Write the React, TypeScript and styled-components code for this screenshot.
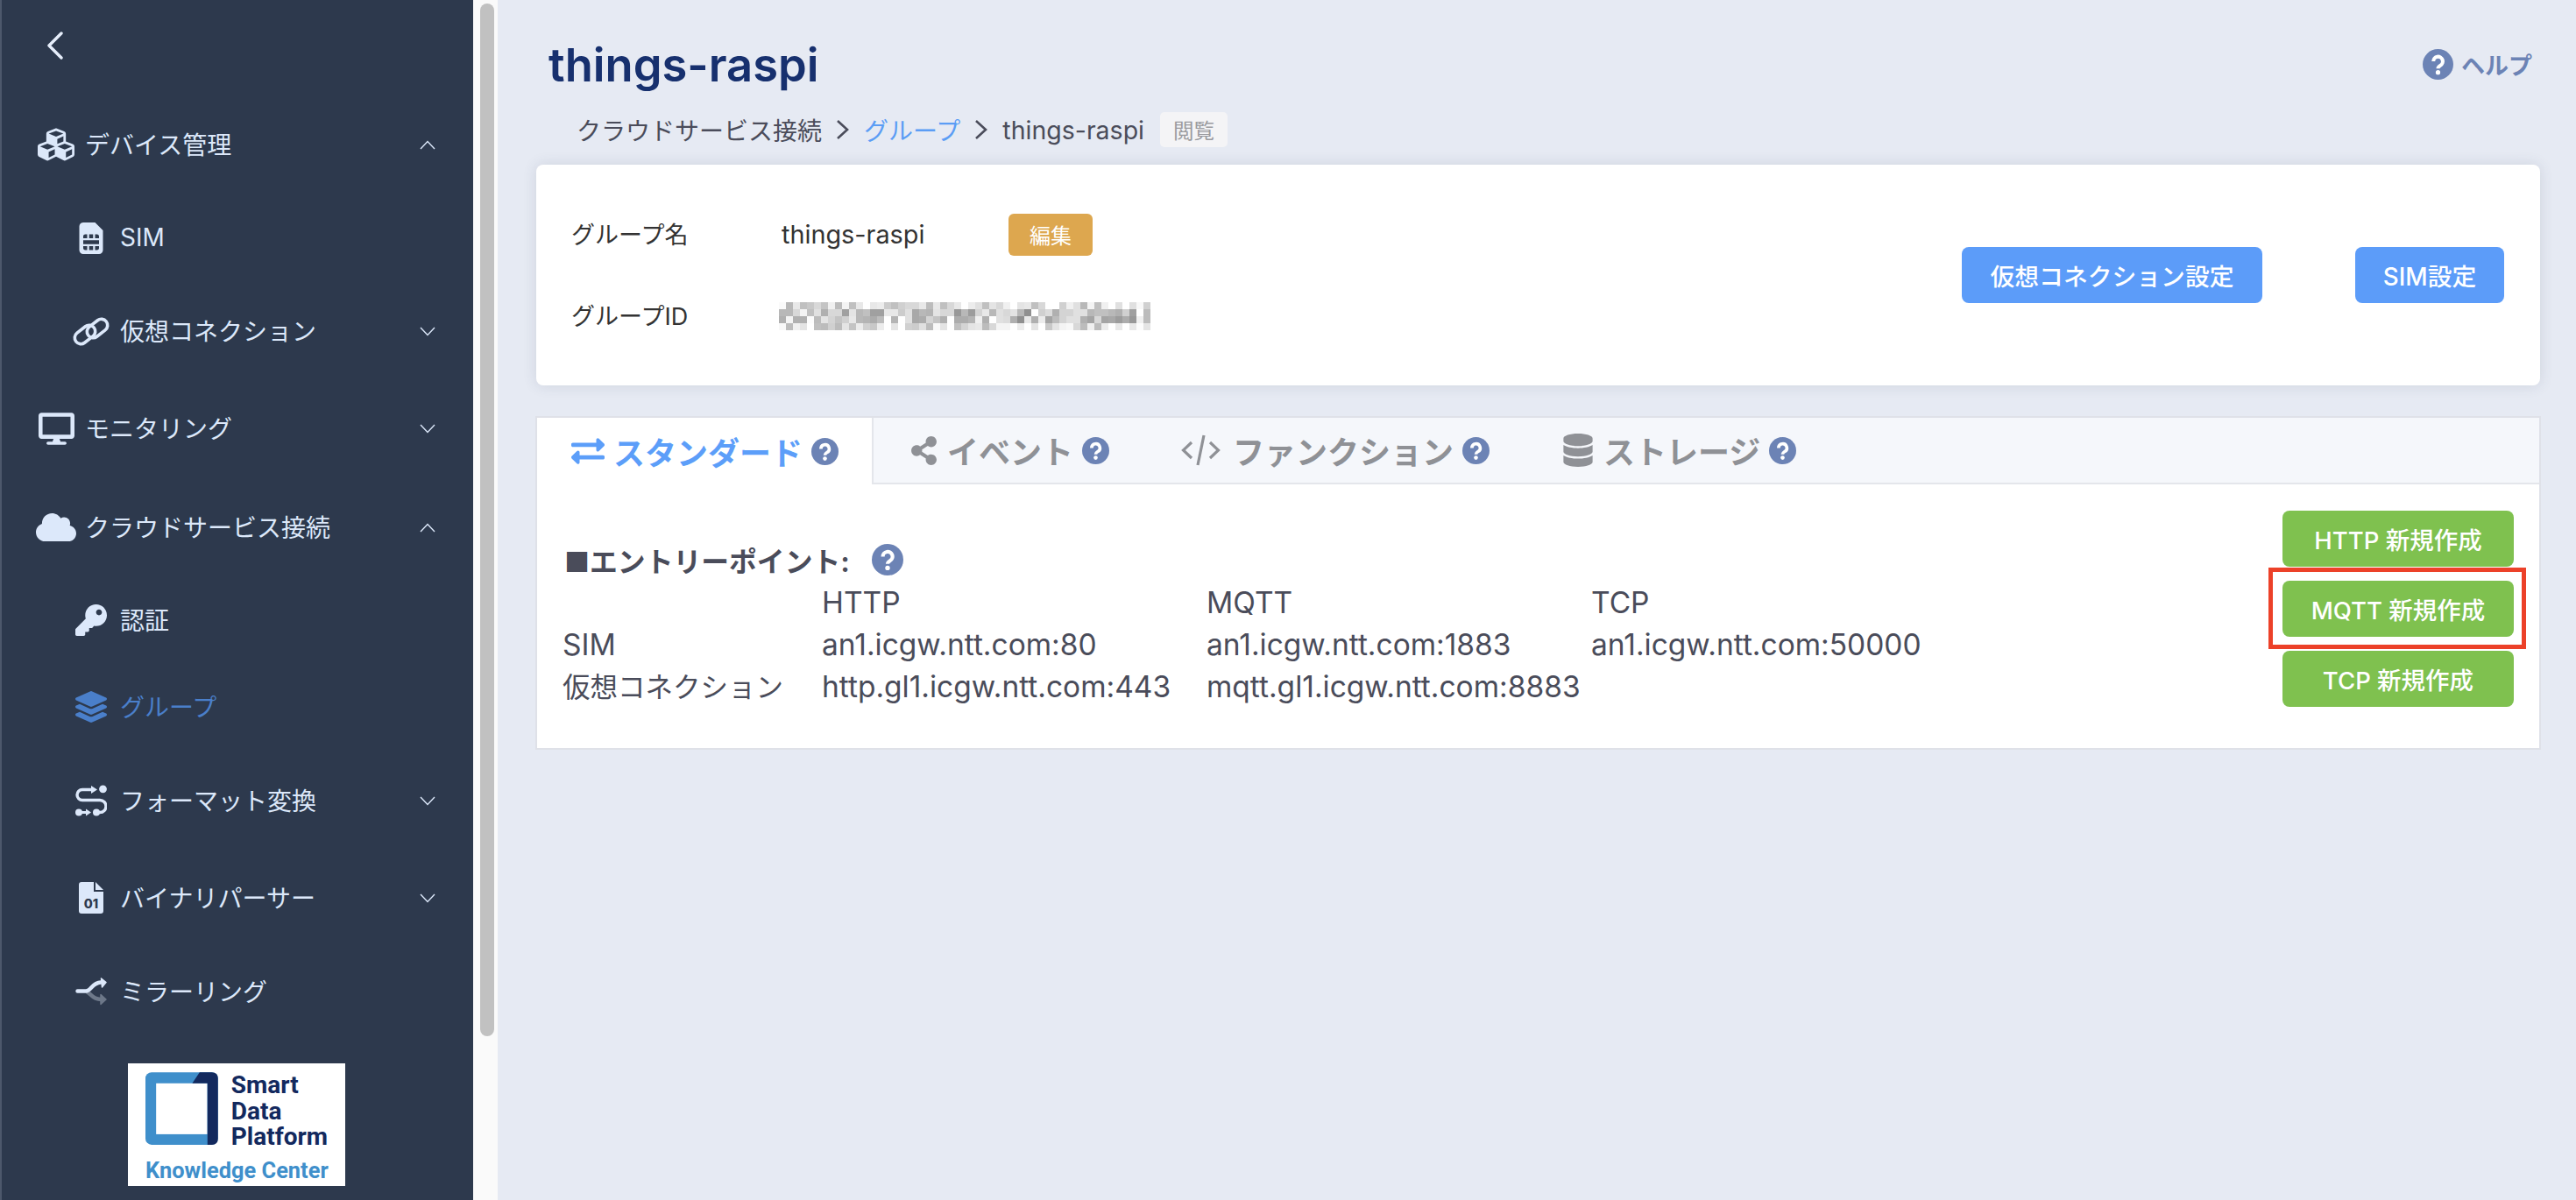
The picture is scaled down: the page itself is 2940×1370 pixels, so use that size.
import React from 'react';
import styled, { createGlobalStyle } from 'styled-components';
import {
  FaCubes,
  FaSimCard,
  FaDesktop,
  FaCloud,
  FaKey,
  FaLayerGroup,
  FaExchangeAlt,
  FaShareAlt,
  FaDatabase,
} from 'react-icons/fa';

const GlobalStyle = createGlobalStyle`
  html, body {
    margin: 0;
    padding: 0;
    height: 100%;
    overflow: hidden;
    background: #e6eaf3;
  }
  body {
    font-family: Inter, "Noto Sans CJK JP", sans-serif;
  }
  * {
    box-sizing: border-box;
  }
`;

const Page = styled.div`
  display: flex;
  width: 100%;
  height: 100vh;
  overflow: hidden;
`;

const Sidebar = styled.aside`
  width: 540px;
  flex: none;
  background: #2d394d;
  border-left: 2px solid #4d586b;
  color: #dce8fa;
`;

const BackBar = styled.div`
  height: 104px;
  margin-bottom: 8px;
  padding-left: 51px;
  display: flex;
  align-items: center;
`;

const NavRow = styled.div<{ $h: number; $sub?: boolean; $active?: boolean }>`
  height: ${(p) => p.$h}px;
  display: flex;
  align-items: center;
  padding-left: ${(p) => (p.$sub ? 79 : 39)}px;
  padding-right: 43px;
  font-size: 28px;
  color: ${(p) => (p.$active ? '#4a7fca' : '#dce8fa')};
`;

const NavIcon = styled.span`
  width: 46px;
  flex: none;
  display: flex;
  justify-content: center;
  align-items: center;
  margin-right: 10px;
`;

const NavLabel = styled.span`
  margin-top: -2px;
`;

const NavChevron = styled.span`
  margin-left: auto;
  display: flex;
`;

const LogoCard = styled.div`
  width: 248px;
  height: 140px;
  margin: 26px 0 0 144px;
  background: #fff;
  padding: 10px 20px 0;
  font-family: Roboto, sans-serif;
  font-weight: 700;
`;

const LogoTop = styled.div`
  display: flex;
  gap: 15px;
`;

const LogoName = styled.div`
  color: #13295e;
  font-size: 28px;
  line-height: 29.5px;
`;

const LogoCaption = styled.div`
  margin-top: 8px;
  color: #3f8fcb;
  font-size: 25.4px;
  line-height: 30px;
  white-space: nowrap;
`;

const ScrollTrack = styled.div`
  width: 28px;
  flex: none;
  background: #fafafa;
  padding: 4px 4px 0 8px;
`;

const ScrollThumb = styled.div`
  height: 1179px;
  border-radius: 8px;
  background: #c1c1c1;
`;

const Main = styled.main`
  flex: 1;
  min-width: 0;
  padding: 0 41px 0 44px;
`;

const HeadRow = styled.div`
  height: 110px;
  padding: 38px 9px 0 14px;
  display: flex;
  justify-content: space-between;
  align-items: center;
`;

const Title = styled.h1`
  margin: 0;
  color: #17306e;
  font-size: 52.5px;
  font-weight: 600;
  line-height: 70px;
`;

const HelpLink = styled.div`
  display: flex;
  align-items: center;
  gap: 9px;
  margin-top: -2px;
  color: #6c83b5;
  font-size: 27px;
  font-weight: 600;
`;

const Breadcrumb = styled.nav`
  height: 40px;
  margin: 18px 0 20px 46px;
  display: flex;
  align-items: center;
  color: #4a4c5a;
  font-size: 28px;
`;

const CrumbLink = styled.span`
  color: #5b9df5;
`;

const CrumbCurrent = styled.span`
  font-size: 28.5px;
`;

const CrumbArrow = styled.span`
  display: flex;
  margin: 0 16px;
`;

const ViewBadge = styled.span`
  height: 40px;
  margin-left: 18px;
  padding: 0 15px;
  display: flex;
  align-items: center;
  border-radius: 5px;
  background: #f4f4f6;
  color: #9a9a9e;
  font-size: 23.5px;
`;

const InfoCard = styled.section`
  height: 252px;
  padding: 0 41px;
  display: flex;
  justify-content: space-between;
  align-items: center;
  background: #fff;
  border-radius: 8px;
  box-shadow: 0 0 16px rgba(60, 70, 100, 0.14);
`;

const InfoGrid = styled.div`
  display: grid;
  grid-template-columns: 239px 259px auto;
  grid-auto-rows: 48px;
  row-gap: 45px;
  align-items: center;
  color: #333;
  font-size: 27px;
`;

const InfoLabel = styled.span`
  margin-top: -2px;
  margin-left: -1px;
`;

const InfoValue = styled.span`
  font-size: 28.8px;
`;

const Mosaic = styled.svg`
  display: block;
  margin-left: -3px;
`;

const EditButton = styled.button`
  width: 96px;
  height: 48px;
  padding: 0;
  border: 0;
  border-radius: 6px;
  background: #dda74f;
  color: #fff;
  font: inherit;
  font-size: 24px;
`;

const ButtonGroup = styled.div`
  display: flex;
  gap: 106px;
`;

const ActionButton = styled.button<{ $wide?: boolean }>`
  width: ${(p) => (p.$wide ? 343 : 170)}px;
  height: 64px;
  padding: 0;
  border: 0;
  border-radius: 8px;
  background: #5c9cf9;
  color: #fff;
  font: inherit;
  font-size: 27.8px;
  font-weight: 500;
`;

const TabCard = styled.section`
  height: 381px;
  margin-top: 35px;
  margin-right: -1px;
  margin-left: -1px;
  background: #fff;
  border: 2px solid #dfe1e8;
`;

const TabBar = styled.div`
  height: 76px;
  display: flex;
  background: #f5f7fb;
`;

const Tab = styled.div<{ $active?: boolean }>`
  display: flex;
  align-items: center;
  gap: 10px;
  padding: 0 ${(p) => (p.$active ? 38 : 41)}px 0 ${(p) => (p.$active ? 39 : 41)}px;
  background: ${(p) => (p.$active ? '#fff' : 'transparent')};
  border-right: ${(p) => (p.$active ? '2px solid #e4e6eb' : '0')};
  border-bottom: ${(p) => (p.$active ? '0' : '2px solid #e4e6eb')};
  color: ${(p) => (p.$active ? '#5c9ef9' : '#8f9196')};
  font-size: 36px;
  font-weight: 700;
  white-space: nowrap;
`;

const TabRest = styled.div`
  flex: 1;
  border-bottom: 2px solid #e4e6eb;
`;

const TabBody = styled.div`
  padding: 30px 29px 0 31px;
  display: flex;
  justify-content: space-between;
`;

const EntryBlock = styled.div`
  padding-top: 38px;
  color: #4a4c5a;
`;

const EntryHeading = styled.div`
  height: 36px;
  display: flex;
  align-items: center;
  gap: 25px;
  margin-bottom: 6px;
  font-size: 31.8px;
  font-weight: 700;
`;

const EntryTable = styled.div`
  display: grid;
  grid-template-columns: 296px 439px 439px auto;
  grid-auto-rows: 48px;
  align-items: center;
  margin-left: -2px;
  white-space: nowrap;
`;

const EntryCell = styled.span<{ $kana?: boolean }>`
  font-size: ${(p) => (p.$kana ? 31.5 : 33.5)}px;
  margin-top: ${(p) => (p.$kana ? -3 : 2)}px;
`;

const CreateColumn = styled.div`
  display: flex;
  flex-direction: column;
  gap: 16px;
`;

const CreateButton = styled.button<{ $marked?: boolean }>`
  position: relative;
  width: 264px;
  height: 64px;
  padding: 0;
  border: 0;
  border-radius: 8px;
  background: #7fc14f;
  color: #fff;
  font: inherit;
  font-size: 27.5px;
  font-weight: 500;

  ${(p) =>
    p.$marked &&
    `
    &::after {
      content: '';
      position: absolute;
      top: -15px;
      right: -14px;
      bottom: -14px;
      left: -16px;
      border: 5px solid #ec4129;
      pointer-events: none;
    }
  `}
`;

const mosaicRows = [
  'fa b8 e8 c0 c8 d8 c4 f0 bc f4 c0 e8 ff e8 ec cc c0 d0 d8 d8 e8 bc e8 c0 d8 e8 ff ec e0 c0 e4 d8 f0 ff e4 e8 c0 d8 ff ff d0 f0 e0 b8 f4 c0 f0 ff e0 ff e0 f8 d0',
  'b8 b8 d8 f4 c0 e0 b0 d8 d8 a0 e4 b8 c0 a0 a0 e8 e8 cc e0 a8 b8 b4 e4 d8 d8 98 b8 9c d4 e8 b8 e0 d8 e4 b8 90 ff d0 dc b0 d4 d4 e0 e0 b8 c0 c0 b8 b0 d0 a0 ff bc',
  'b0 f4 b0 b0 fc bc e4 d4 c4 d0 e8 b8 b4 ac bc ff b4 ff e0 a8 ac d4 c4 b0 ff ac ac b4 f0 b0 ff e0 dc b0 90 e8 b0 ec a4 bc d4 e0 e0 b0 a4 d8 a4 a8 9c ac 98 f0 bc',
  'f8 bc f0 e4 ff c0 bc d0 bc e4 c4 ec d0 c8 ec ff e4 ff d0 cc e0 bc f8 e4 ff c0 d4 e4 e8 bc d8 f4 f4 ff ec ff e4 ff c8 e4 f4 f8 d8 bc f0 bc ec ff e8 ff e8 fc e4',
].map((row) => row.split(' '));

const Chevron = ({ up }: { up?: boolean }) => (
  <svg width="18" height="11" viewBox="0 0 18 11" fill="none" stroke="#dce8fa" strokeWidth="1.4">
    <polyline points={up ? '1,10 9,1.5 17,10' : '1,1 9,9.5 17,1'} />
  </svg>
);

const CrumbChevron = () => (
  <svg width="16" height="22" viewBox="0 0 16 22" fill="none" stroke="#4a4c5a" strokeWidth="2.6">
    <polyline points="2,1 13,11 2,21" />
  </svg>
);

// filled circle with a small heavy question mark
const HelpIcon = ({ size }: { size: number }) => (
  <svg width={size} height={size} viewBox="0 0 36 36" style={{ flex: 'none' }}>
    <circle cx="18" cy="18" r="18" fill="#6c83b5" />
    <path d="M12.6 14.4a5.5 5.5 0 1 1 8.2 4.8c-2 1.2-2.8 1.9-2.8 3.6" fill="none" stroke="#fff" strokeWidth="4.2" />
    <circle cx="18" cy="27.4" r="2.7" fill="#fff" />
  </svg>
);

const ChainIcon = () => (
  <svg width="42" height="33" viewBox="0 0 42 33" fill="none" stroke="currentColor" strokeWidth="3.6">
    <rect x="1" y="13" width="26" height="14" rx="7" transform="rotate(-38 14 20)" />
    <rect x="15" y="6" width="26" height="14" rx="7" transform="rotate(-38 28 13)" />
  </svg>
);

const FormatIcon = () => (
  <svg width="36" height="36" viewBox="0 0 36 36">
    <path d="M20 5.5H8a6 6 0 0 0 0 12H28a7 7 0 0 1 0 14H24" fill="none" stroke="currentColor" strokeWidth="3.4" />
    <polygon points="18,1 25,5.5 18,10" fill="currentColor" />
    <circle cx="31.5" cy="4.8" r="4.4" fill="currentColor" />
    <circle cx="4" cy="31.5" r="4" fill="currentColor" />
    <rect x="6" y="30" width="8" height="3" fill="currentColor" />
    <polygon points="12,27.5 18,31.5 12,35.5" fill="currentColor" />
    <circle cx="24" cy="31.5" r="4" fill="currentColor" />
  </svg>
);

const BinaryFileIcon = () => (
  <svg width="28" height="36" viewBox="0 0 28 36">
    <path d="M3 0H17V11H28V33Q28 36 25 36H3Q0 36 0 33V3Q0 0 3 0Z" fill="currentColor" />
    <path d="M19 0L28 9H19Z" fill="currentColor" />
    <text x="14" y="30" textAnchor="middle" fontFamily="Inter" fontWeight="800" fontSize="14.5" fill="#2d394d">
      01
    </text>
  </svg>
);

const MirrorIcon = () => (
  <svg width="36" height="32" viewBox="0 0 36 32">
    <path d="M13 16C18 19 20 25 29 25" stroke="#6d7889" strokeWidth="4.5" fill="none" />
    <polygon points="29,19.5 35,25 29,30.5" fill="#6d7889" stroke="#6d7889" strokeWidth="1.5" strokeLinejoin="round" />
    <path d="M2.5 15.5H12C18 15.5 19 6 29 5.6" stroke="currentColor" strokeWidth="4.5" strokeLinecap="round" fill="none" />
    <polygon points="29.5,1 35,5.6 30.5,11" fill="currentColor" stroke="currentColor" strokeWidth="1.5" strokeLinejoin="round" />
  </svg>
);

const CodeIcon = () => (
  <svg width="49" height="36" viewBox="0 0 49 36" fill="none" stroke="currentColor" strokeWidth="3.2">
    <polyline points="12,9 2.5,18 12,27" />
    <polyline points="33,9 42.5,18 33,27" />
    <line x1="26" y1="1" x2="19" y2="35" />
  </svg>
);

const navItems: {
  label: string;
  icon: React.ReactNode;
  h: number;
  sub?: boolean;
  active?: boolean;
  open?: 'up' | 'down';
}[] = [
  { label: 'デバイス管理', icon: <FaCubes size={42} />, h: 106, open: 'up' },
  { label: 'SIM', icon: <FaSimCard size={36} />, h: 108, sub: true },
  { label: '仮想コネクション', icon: <ChainIcon />, h: 104, sub: true, open: 'down' },
  { label: 'モニタリング', icon: <FaDesktop size={41} />, h: 118, open: 'down' },
  { label: 'クラウドサービス接続', icon: <FaCloud size={46} />, h: 108, open: 'up' },
  { label: '認証', icon: <FaKey size={36} />, h: 104, sub: true },
  { label: 'グループ', icon: <FaLayerGroup size={36} />, h: 94, sub: true, active: true },
  { label: 'フォーマット変換', icon: <FormatIcon />, h: 120, sub: true, open: 'down' },
  { label: 'バイナリパーサー', icon: <BinaryFileIcon />, h: 102, sub: true, open: 'down' },
  { label: 'ミラーリング', icon: <MirrorIcon />, h: 112, sub: true },
];

const endpoints = [
  ['', 'HTTP', 'MQTT', 'TCP'],
  ['SIM', 'an1.icgw.ntt.com:80', 'an1.icgw.ntt.com:1883', 'an1.icgw.ntt.com:50000'],
  ['仮想コネクション', 'http.gl1.icgw.ntt.com:443', 'mqtt.gl1.icgw.ntt.com:8883', ''],
];

const tabs = [
  { label: 'スタンダード', icon: <FaExchangeAlt size={38} />, active: true },
  { label: 'イベント', icon: <FaShareAlt size={33} /> },
  { label: 'ファンクション', icon: <CodeIcon /> },
  { label: 'ストレージ', icon: <FaDatabase size={38} /> },
];

const App: React.FC = () => {
  return (
    <Page>
      <GlobalStyle />
      <Sidebar>
        <BackBar>
          <svg width="20" height="32" viewBox="0 0 20 32" fill="none" stroke="#e6eefb" strokeWidth="3.4" strokeLinecap="round" strokeLinejoin="round">
            <polyline points="17,2 3,16 17,30" />
          </svg>
        </BackBar>
        {navItems.map((item) => (
          <NavRow key={item.label} $h={item.h} $sub={item.sub} $active={item.active}>
            <NavIcon>{item.icon}</NavIcon>
            <NavLabel>{item.label}</NavLabel>
            {item.open && (
              <NavChevron>
                <Chevron up={item.open === 'up'} />
              </NavChevron>
            )}
          </NavRow>
        ))}
        <LogoCard>
          <LogoTop>
            <svg width="83" height="83" viewBox="0 0 83 83">
              <rect width="83" height="83" rx="7" fill="#3f8fcb" />
              <rect x="12.2" y="12.7" width="58.6" height="58.3" fill="#fff" />
              <path d="M62 0H76Q83 0 83 7V76Q83 83 76 83H71V12.7H53.6Z" fill="#13295e" />
            </svg>
            <LogoName>
              Smart
              <br />
              Data
              <br />
              Platform
            </LogoName>
          </LogoTop>
          <LogoCaption>Knowledge Center</LogoCaption>
        </LogoCard>
      </Sidebar>
      <ScrollTrack>
        <ScrollThumb />
      </ScrollTrack>
      <Main>
        <HeadRow>
          <Title>things-raspi</Title>
          <HelpLink>
            <HelpIcon size={35} />
            ヘルプ
          </HelpLink>
        </HeadRow>
        <Breadcrumb>
          クラウドサービス接続
          <CrumbArrow>
            <CrumbChevron />
          </CrumbArrow>
          <CrumbLink>グループ</CrumbLink>
          <CrumbArrow>
            <CrumbChevron />
          </CrumbArrow>
          <CrumbCurrent>things-raspi</CrumbCurrent>
          <ViewBadge>閲覧</ViewBadge>
        </Breadcrumb>
        <InfoCard>
          <InfoGrid>
            <InfoLabel>グループ名</InfoLabel>
            <InfoValue>things-raspi</InfoValue>
            <EditButton>編集</EditButton>
            <InfoLabel>グループID</InfoLabel>
            <Mosaic width="424" height="32" viewBox="0 0 424 32" shapeRendering="crispEdges">
              {mosaicRows.map((row, y) =>
                row.map((v, x) => (
                  <rect key={`${x}-${y}`} x={x * 8} y={y * 8} width="8" height="8" fill={`#${v}${v}${v}`} />
                )),
              )}
            </Mosaic>
          </InfoGrid>
          <ButtonGroup>
            <ActionButton $wide>仮想コネクション設定</ActionButton>
            <ActionButton>SIM設定</ActionButton>
          </ButtonGroup>
        </InfoCard>
        <TabCard>
          <TabBar>
            {tabs.map((tab) => (
              <Tab key={tab.label} $active={tab.active}>
                {tab.icon}
                {tab.label}
                <HelpIcon size={31} />
              </Tab>
            ))}
            <TabRest />
          </TabBar>
          <TabBody>
            <EntryBlock>
              <EntryHeading>
                <span>■エントリーポイント:</span>
                <HelpIcon size={36} />
              </EntryHeading>
              <EntryTable>
                {endpoints.flat().map((cell, i) => (
                  <EntryCell key={i} $kana={cell === '仮想コネクション'}>
                    {cell}
                  </EntryCell>
                ))}
              </EntryTable>
            </EntryBlock>
            <CreateColumn>
              <CreateButton>HTTP 新規作成</CreateButton>
              <CreateButton $marked>MQTT 新規作成</CreateButton>
              <CreateButton>TCP 新規作成</CreateButton>
            </CreateColumn>
          </TabBody>
        </TabCard>
      </Main>
    </Page>
  );
};

export default App;
